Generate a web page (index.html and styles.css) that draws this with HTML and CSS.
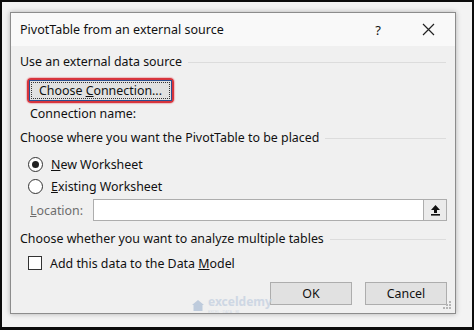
FILE: index.html
```html
<!DOCTYPE html>
<html lang="en">

<head>
    <meta charset="UTF-8">
    <meta name="viewport" content="width=device-width, initial-scale=1.0">
    <title>PivotTable from an external source</title>
    <link rel="stylesheet" href="styles.css">
</head>

<body>
    <div class="frame">
        <div class="dialog">
            <div class="titlebar">
                <span class="title">PivotTable from an external source</span>
                <span class="help">?</span>
                <svg class="close" width="13" height="13" viewBox="0 0 13 13">
                    <path d="M1 1 L12 12 M12 1 L1 12" stroke="#222" stroke-width="1.2" fill="none" />
                </svg>
            </div>

            <div class="content">
                <div class="group-head">
                    <span>Use an external data source</span>
                    <span class="rule"></span>
                </div>
                <div class="highlight">
                    <button class="btn btn-focus"><span class="focus-rect">Choose <u>C</u>onnection...</span></button>
                </div>
                <div class="row indent2">Connection name:</div>

                <div class="group-head gap-head">
                    <span>Choose where you want the PivotTable to be placed</span>
                    <span class="rule"></span>
                </div>
                <label class="option first-option">
                    <span class="radio checked"></span>
                    <span><u>N</u>ew Worksheet</span>
                </label>
                <label class="option second-option">
                    <span class="radio"></span>
                    <span><u>E</u>xisting Worksheet</span>
                </label>
                <div class="location">
                    <span class="location-label"><u>L</u>ocation:</span>
                    <span class="location-input"></span>
                    <span class="picker">
                        <svg width="11" height="12" viewBox="0 0 11 12">
                            <path d="M5.5 1 L10 6 L7 6 L7 9 L4 9 L4 6 L1 6 Z" fill="#111" />
                            <rect x="1" y="10" width="9" height="1.6" fill="#111" />
                        </svg>
                    </span>
                </div>

                <div class="group-head gap-head2">
                    <span>Choose whether you want to analyze multiple tables</span>
                    <span class="rule"></span>
                </div>
                <label class="option check-option">
                    <span class="checkbox"></span>
                    <span>Add this data to the Data <u>M</u>odel</span>
                </label>

                <div class="footer">
                    <button class="btn wide">OK</button>
                    <button class="btn wide">Cancel</button>
                </div>
            </div>

            <div class="watermark">
                <svg width="14" height="13" viewBox="0 0 14 13">
                    <path d="M7 1 L13 6 L11.5 6 L11.5 12 L2.5 12 L2.5 6 L1 6 Z" fill="#aebfd6" />
                </svg>
                <span class="wm-text">
                    <span class="wm-name">exceldemy</span>
                    <span class="wm-sub">EXCEL · DATA · BI</span>
                </span>
            </div>

            <svg class="grip" width="9" height="9" viewBox="0 0 9 9">
                <rect x="6" y="0" width="2" height="2" fill="#b5b5b5" />
                <rect x="3" y="3" width="2" height="2" fill="#b5b5b5" />
                <rect x="6" y="3" width="2" height="2" fill="#b5b5b5" />
                <rect x="0" y="6" width="2" height="2" fill="#b5b5b5" />
                <rect x="3" y="6" width="2" height="2" fill="#b5b5b5" />
                <rect x="6" y="6" width="2" height="2" fill="#b5b5b5" />
            </svg>
        </div>
    </div>
</body>

</html>
```

FILE: styles.css
```css
* {
    margin: 0;
    padding: 0;
    box-sizing: border-box;
}

body {
    font-family: "Noto Sans", "Liberation Sans", sans-serif;
    font-size: 12.4px;
    color: #111;
    background: #000;
}

.frame {
    width: 474px;
    height: 330px;
    border: 2px solid #0c0c0c;
    border-bottom-width: 3px;
    background: #f3f3f3;
    padding: 10px 0 0 8px;
}

.dialog {
    position: relative;
    width: 446px;
    height: 302px;
    background: #f0f0f0;
    border: 1px solid #8c8c8c;
    box-shadow: 0 0 5px rgba(0, 0, 0, 0.28);
}

.titlebar {
    height: 33px;
    background: #f9f9f9;
    display: flex;
    align-items: center;
    padding: 0 20px 0 9px;
}

.titlebar .title {
    flex: 1;
    font-size: 12.5px;
}

.titlebar .help {
    font-size: 13px;
    margin-right: 41px;
}

.content {
    padding: 8px 8px 0 9px;
}

.group-head {
    display: flex;
    align-items: center;
    height: 16px;
    line-height: 16px;
}

.group-head .rule {
    flex: 1;
    height: 1px;
    background: #dcdcdc;
    margin-left: 6px;
    margin-right: 1px;
}

.gap-head {
    margin-top: 8px;
}

.gap-head2 {
    margin-top: 10px;
}

.row {
    height: 16px;
    line-height: 16px;
}

.indent2 {
    margin: 3px 0 0 10px;
}

.highlight {
    display: inline-flex;
    margin: 8px 0 0 7px;
    border: 2px solid #d7343c;
    border-radius: 4px;
    box-shadow: 0 0 1px 1px rgba(230, 120, 128, 0.45);
}

.btn {
    font-family: inherit;
    font-size: 12.4px;
    color: #111;
    background: #e1e1e1;
    border: 1px solid #adadad;
    height: 22px;
}

.btn-focus {
    width: 143px;
    height: 21px;
    border-color: #2c4f8f;
    padding: 1px;
    display: flex;
}

.focus-rect {
    display: block;
    flex: 1;
    border: 1px dotted #333;
    text-align: center;
    line-height: 15px;
    white-space: nowrap;
}

.option {
    display: flex;
    align-items: center;
    height: 16px;
    margin-left: 8px;
    gap: 8px;
}

.first-option {
    margin-top: 10px;
}

.second-option {
    margin-top: 6px;
}

.check-option {
    margin-top: 8px;
}

.radio {
    width: 15px;
    height: 15px;
    border: 1px solid #333;
    border-radius: 50%;
    background: #fff;
    display: flex;
    align-items: center;
    justify-content: center;
}

.radio.checked::after {
    content: "";
    width: 7px;
    height: 7px;
    border-radius: 50%;
    background: #222;
}

.checkbox {
    width: 14px;
    height: 14px;
    border: 1px solid #333;
    background: #fff;
}

.location {
    display: flex;
    align-items: center;
    height: 22px;
    margin-top: 5px;
}

.location-label {
    width: 73px;
    padding-left: 10px;
    color: #6d6d6d;
}

.location-input {
    width: 331px;
    height: 22px;
    background: #fff;
    border: 1px solid #adadad;
}

.picker {
    width: 23px;
    height: 22px;
    background: #ebebeb;
    border: 1px solid #adadad;
    border-left: none;
    display: flex;
    align-items: center;
    justify-content: center;
}

.footer {
    display: flex;
    justify-content: flex-end;
    gap: 13px;
    margin-top: 11px;
}

.wide {
    width: 82px;
    height: 23px;
}

.watermark {
    position: absolute;
    left: 180px;
    top: 283px;
    display: flex;
    align-items: center;
    gap: 3px;
    opacity: 0.75;
}

.wm-text {
    display: flex;
    flex-direction: column;
    gap: 1px;
}

.wm-name {
    font-size: 12px;
    font-weight: bold;
    color: #c3cfe0;
    line-height: 12px;
}

.wm-sub {
    font-size: 4px;
    line-height: 5px;
    color: #ccd5e2;
}

.grip {
    position: absolute;
    right: 3px;
    bottom: 3px;
}
```
